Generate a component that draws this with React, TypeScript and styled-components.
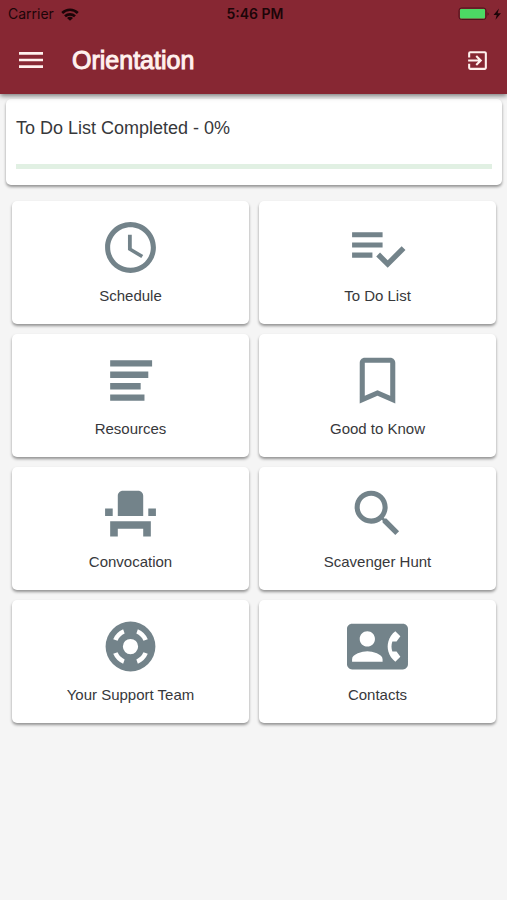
import React from "react";
import styled, { createGlobalStyle } from "styled-components";

const GlobalStyle = createGlobalStyle`
  * { box-sizing: border-box; }
  body {
    margin: 0;
    background: #f5f5f5;
    color: #37383b;
    font-family: "Liberation Sans", Arial, sans-serif;
  }
  button { font: inherit; color: inherit; border: 0; padding: 0; cursor: pointer; }
`;

const Header = styled.header`
  position: relative;
  background: #872733;
  color: #fff1ee;
  box-shadow: 0 2px 5px rgba(0, 0, 0, 0.5);
`;

const StatusBar = styled.div`
  display: grid;
  grid-template-columns: 1fr auto 1fr;
  align-items: center;
  height: 28px;
  padding: 0 5px 0 8px;
  color: #1c0508;
  font-family: Inter, sans-serif;
  font-size: 14px;
  line-height: 16px;
`;

const Carrier = styled.div`
  display: flex;
  align-items: center;
  gap: 7px;
`;

const Clock = styled.time`
  font-weight: 600;
`;

const Power = styled.div`
  display: flex;
  justify-content: flex-end;
`;

const AppBar = styled.div`
  display: flex;
  align-items: center;
  height: 66px;
  padding: 0 17px 2px 15px;
`;

const IconButton = styled.button`
  display: flex;
  background: none;
`;

const Title = styled.h1`
  flex: 1;
  margin: 0 0 0 25px;
  font-size: 25px;
  line-height: 32px;
  font-weight: 400;
  -webkit-text-stroke: 1px #fff1ee;
  paint-order: stroke;
`;

const Main = styled.main`
  padding: 5px 5px 16px 6px;
`;

const surfaceShadow = "0 2px 3px rgba(0, 0, 0, 0.4)";

const ProgressCard = styled.section`
  display: flex;
  flex-direction: column;
  gap: 25px;
  padding: 19px 10px 16px;
  border-radius: 5px;
  background: #fff;
  box-shadow: ${surfaceShadow};
`;

const ProgressLabel = styled.label`
  font-size: 18px;
  line-height: 21px;
`;

const ProgressBar = styled.progress`
  display: block;
  width: 100%;
  height: 5px;
  border: 0;
  appearance: none;
  background: #e1f0e3;
  &::-webkit-progress-bar { background: #e1f0e3; }
  &::-webkit-progress-value { background: #4caf50; }
`;

const TileGrid = styled.nav`
  display: grid;
  grid-template-columns: 1fr 1fr;
  gap: 10px;
  padding: 16px 6px 0;
`;

const Tile = styled.button`
  display: flex;
  flex-direction: column;
  align-items: center;
  height: 123px;
  border-radius: 5px;
  background: #fff;
  box-shadow: ${surfaceShadow};
  && { padding: 16px 8px 0; }
`;

const TileIcon = styled.svg`
  width: 61px;
  height: 61px;
  flex: none;
  fill: #73838a;
`;

const TileLabel = styled.span`
  margin-top: 8px;
  font-size: 15px;
  line-height: 20px;
`;

const tiles = [
  {
    label: "Schedule",
    d: "M11.99 2C6.47 2 2 6.48 2 12s4.47 10 9.99 10C17.52 22 22 17.52 22 12S17.52 2 11.99 2zM12 20c-4.42 0-8-3.58-8-8s3.58-8 8-8 8 3.58 8 8-3.58 8-8 8zm.5-13H11v6l5.25 3.15.75-1.23-4.5-2.67z",
  },
  {
    label: "To Do List",
    d: "M14 10H2v2h12v-2zm0-4H2v2h12V6zM2 16h8v-2H2v2zm19.5-4.5L23 13l-6.99 7-4.51-4.5L13 14l3.01 3 5.49-5.5z",
  },
  {
    label: "Resources",
    d: "M4 4h16.5v2.5H4zM4 8.5h15V11H4zM4 13h12v2.5H4zM4 17.5h13.5V20H4z",
  },
  {
    label: "Good to Know",
    d: "M17 3H7c-1.1 0-1.99.9-1.99 2L5 21l7-3 7 3V5c0-1.1-.9-2-2-2zm0 15l-5-2.18L7 18V5h10v13z",
  },
  {
    label: "Convocation",
    d: "M4 18v3h3v-3h10v3h3v-6H4zm15-8h3v3h-3zM2 10h3v3H2zm15 3H7V5c0-1.1.9-2 2-2h6c1.1 0 2 .9 2 2v8z",
  },
  {
    label: "Scavenger Hunt",
    d: "M15.5 14h-.79l-.28-.27C15.41 12.59 16 11.11 16 9.5 16 5.91 13.09 3 9.5 3S3 5.91 3 9.5 5.91 16 9.5 16c1.61 0 3.09-.59 4.23-1.57l.27.28v.79l5 4.99L20.49 19l-4.99-5zm-6 0C7.01 14 5 11.99 5 9.5S7.01 5 9.5 5 14 7.01 14 9.5 11.99 14 9.5 14z",
  },
  {
    label: "Your Support Team",
    d: "M12 2.2a9.8 9.8 0 1 0 0 19.6 9.8 9.8 0 0 0 0-19.6zm0 6.8a3 3 0 1 1 0 6 3 3 0 0 1 0-6zM5.2 9.1A7.4 7.4 0 0 1 9.1 5.2L9.7 6.9A5.6 5.6 0 0 0 6.9 9.7zM14.9 5.2A7.4 7.4 0 0 1 18.8 9.1L17.1 9.7A5.6 5.6 0 0 0 14.3 6.9zM18.8 14.9A7.4 7.4 0 0 1 14.9 18.8L14.3 17.1A5.6 5.6 0 0 0 17.1 14.3zM9.1 18.8A7.4 7.4 0 0 1 5.2 14.9L6.9 14.3A5.6 5.6 0 0 0 9.7 17.1z",
  },
  {
    label: "Contacts",
    d: "M22 3H2C.9 3 0 3.9 0 5v14c0 1.1.9 2 2 2h20c1.1 0 1.99-.9 1.99-2L24 5c0-1.1-.9-2-2-2zM8 6c1.66 0 3 1.34 3 3s-1.34 3-3 3-3-1.34-3-3 1.34-3 3-3zm6 12H2v-1c0-2 4-3.1 6-3.1s6 1.1 6 3.1v1zm3.85-4h1.64L21 16l-1.99 1.99c-1.31-.98-2.28-2.38-2.73-3.99-.18-.64-.28-1.31-.28-2s.1-1.36.28-2c.45-1.62 1.42-3.01 2.73-3.99L21 8l-1.51 2h-1.64c-.22.63-.35 1.3-.35 2s.13 1.37.35 2z",
  },
];

const WifiIcon = () => (
  <svg width="18" height="13" viewBox="0 0 18 13" fill="none" stroke="currentColor" strokeWidth="2.6" aria-hidden="true">
    <path d="M1.2 5C5.6.6 12.4.6 16.8 5M4 8.3c2.8-2.6 7.2-2.6 10 0" />
    <path d="M9 12.8 6 9.9c1.7-1.5 4.3-1.5 6 0z" fill="currentColor" stroke="none" />
  </svg>
);

const BatteryIcon = () => (
  <svg width="44" height="14" viewBox="0 0 44 14" aria-hidden="true">
    <rect x="1" y="1" width="27" height="11.5" rx="2.5" fill="none" stroke="#4c141c" />
    <rect x="2" y="2" width="25" height="9.5" rx="1" fill="#4cd964" />
    <path d="M29.5 5.2c1.6.6 1.6 3 0 3.6z" fill="#4c141c" />
    <path d="M41 1.5 35.5 8h3.2l-1.2 4.8L43 6.2h-3.4z" fill="#1c0508" />
  </svg>
);

const MenuIcon = () => (
  <svg width="32" height="32" viewBox="0 0 24 24" fill="currentColor" aria-hidden="true">
    <path d="M3 18h18v-2H3v2zm0-5h18v-2H3v2zm0-7v2h18V6H3z" />
  </svg>
);

const ExitIcon = () => (
  <svg width="25" height="25" viewBox="0 0 24 24" fill="currentColor" aria-hidden="true">
    <path d="M10.09 15.59 11.5 17l5-5-5-5-1.41 1.41L12.67 11H3v2h9.67l-2.58 2.59zM19 3H5a2 2 0 0 0-2 2v4h2V5h14v14H5v-4H3v4a2 2 0 0 0 2 2h14c1.1 0 2-.9 2-2V5c0-1.1-.9-2-2-2z" />
  </svg>
);

export default function App() {
  return (
    <>
      <GlobalStyle />
      <Header>
        <StatusBar>
          <Carrier>
            Carrier
            <WifiIcon />
          </Carrier>
          <Clock>5:46 PM</Clock>
          <Power>
            <BatteryIcon />
          </Power>
        </StatusBar>
        <AppBar>
          <IconButton aria-label="Menu">
            <MenuIcon />
          </IconButton>
          <Title>Orientation</Title>
          <IconButton aria-label="Exit">
            <ExitIcon />
          </IconButton>
        </AppBar>
      </Header>
      <Main>
        <ProgressCard>
          <ProgressLabel htmlFor="todo-progress">To Do List Completed - 0%</ProgressLabel>
          <ProgressBar id="todo-progress" value={0} max={100} />
        </ProgressCard>
        <TileGrid aria-label="Orientation sections">
          {tiles.map(({ label, d }) => (
            <Tile key={label}>
              <TileIcon viewBox="0 0 24 24" aria-hidden="true">
                <path d={d} fillRule="evenodd" />
              </TileIcon>
              <TileLabel>{label}</TileLabel>
            </Tile>
          ))}
        </TileGrid>
      </Main>
    </>
  );
}
